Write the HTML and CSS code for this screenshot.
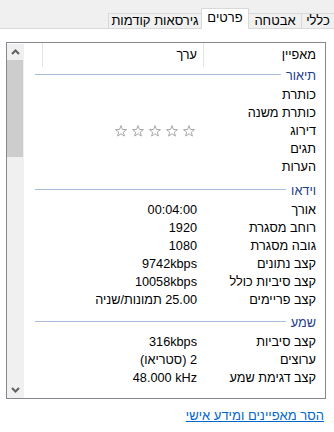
FILE: index.html
```html
<!DOCTYPE html>
<html lang="he" dir="rtl">
<head>
<meta charset="utf-8">
<link rel="stylesheet" href="styles.css">
</head>
<body>
<div class="tabs">
  <div class="tab tab-general">כללי</div>
  <div class="tab tab-security">אבטחה</div>
  <div class="tab tab-details selected">פרטים</div>
  <div class="tab tab-versions">גירסאות קודמות</div>
</div>
<div class="page">
  <div class="listbox">
    <div class="content">
      <div class="row header">
        <div class="cell prop hcell">מאפיין</div>
        <div class="cell val hcell">ערך</div>
        <div class="cell rest"></div>
      </div>
      <div class="group first"><span class="gtext">תיאור</span><span class="gline"></span></div>
      <div class="row"><div class="cell prop">כותרת</div><div class="cell val"></div><div class="cell rest"></div></div>
      <div class="row"><div class="cell prop">כותרת משנה</div><div class="cell val"></div><div class="cell rest"></div></div>
      <div class="row"><div class="cell prop">דירוג</div><div class="cell val">
        <div class="stars">
          <svg class="star" width="12" height="12" viewBox="0 0 12 12"><polygon points="6,0.6 7.41,4.46 11.52,4.61 8.28,7.14 9.41,11.09 6,8.8 2.59,11.09 3.72,7.14 0.48,4.61 4.59,4.46"/></svg>
          <svg class="star" width="12" height="12" viewBox="0 0 12 12"><polygon points="6,0.6 7.41,4.46 11.52,4.61 8.28,7.14 9.41,11.09 6,8.8 2.59,11.09 3.72,7.14 0.48,4.61 4.59,4.46"/></svg>
          <svg class="star" width="12" height="12" viewBox="0 0 12 12"><polygon points="6,0.6 7.41,4.46 11.52,4.61 8.28,7.14 9.41,11.09 6,8.8 2.59,11.09 3.72,7.14 0.48,4.61 4.59,4.46"/></svg>
          <svg class="star" width="12" height="12" viewBox="0 0 12 12"><polygon points="6,0.6 7.41,4.46 11.52,4.61 8.28,7.14 9.41,11.09 6,8.8 2.59,11.09 3.72,7.14 0.48,4.61 4.59,4.46"/></svg>
          <svg class="star" width="12" height="12" viewBox="0 0 12 12"><polygon points="6,0.6 7.41,4.46 11.52,4.61 8.28,7.14 9.41,11.09 6,8.8 2.59,11.09 3.72,7.14 0.48,4.61 4.59,4.46"/></svg>
        </div>
      </div><div class="cell rest"></div></div>
      <div class="row"><div class="cell prop">תגים</div><div class="cell val"></div><div class="cell rest"></div></div>
      <div class="row"><div class="cell prop">הערות</div><div class="cell val"></div><div class="cell rest"></div></div>

      <div class="group g-video"><span class="gtext">וידאו</span><span class="gline"></span></div>
      <div class="row"><div class="cell prop">אורך</div><div class="cell val">00:04:00</div><div class="cell rest"></div></div>
      <div class="row"><div class="cell prop">רוחב מסגרת</div><div class="cell val">1920</div><div class="cell rest"></div></div>
      <div class="row"><div class="cell prop">גובה מסגרת</div><div class="cell val">1080</div><div class="cell rest"></div></div>
      <div class="row"><div class="cell prop">קצב נתונים</div><div class="cell val">9742kbps</div><div class="cell rest"></div></div>
      <div class="row"><div class="cell prop">קצב סיביות כולל</div><div class="cell val">10058kbps</div><div class="cell rest"></div></div>
      <div class="row"><div class="cell prop">קצב פריימים</div><div class="cell val">25.00 תמונות/שניה</div><div class="cell rest"></div></div>

      <div class="group g-audio"><span class="gtext">שמע</span><span class="gline"></span></div>
      <div class="row"><div class="cell prop">קצב סיביות</div><div class="cell val">316kbps</div><div class="cell rest"></div></div>
      <div class="row"><div class="cell prop">ערוצים</div><div class="cell val">2 (סטריאו)</div><div class="cell rest"></div></div>
      <div class="row"><div class="cell prop">קצב דגימת שמע</div><div class="cell val"><span dir="ltr">48.000 kHz</span></div><div class="cell rest"></div></div>
      <div class="tail"><span class="tail-dots"></span></div>
    </div>
    <div class="scrollbar">
      <div class="sb-btn">
        <svg width="17" height="16" viewBox="0 0 17 16"><polyline points="5,10 8.5,6.5 12,10" class="chev"/></svg>
      </div>
      <div class="sb-track">
        <div class="sb-thumb"></div>
      </div>
      <div class="sb-btn">
        <svg width="17" height="16" viewBox="0 0 17 16"><polyline points="5,6 8.5,9.5 12,6" class="chev"/></svg>
      </div>
    </div>
  </div>
  <div class="linkrow"><a class="link" href="#">הסר מאפיינים ומידע אישי</a></div>
</div>
</body>
</html>
```

FILE: styles.css
```css
html, body {
  margin: 0;
  padding: 0;
}
body {
  width: 334px;
  height: 432px;
  overflow: hidden;
  background: #ffffff;
  font-family: "Liberation Sans", Arial, sans-serif;
  font-size: 12.7px;
  color: #000000;
  direction: rtl;
}

/* Tabs */
.tabs {
  height: 28px;
  background: #f0f0f0;
  border-bottom: 1px solid #d9d9d9;
  display: flex;
  align-items: flex-end;
  position: relative;
}
.tab {
  box-sizing: border-box;
  height: 15px;
  line-height: 13px;
  text-align: center;
  white-space: nowrap;
  border-top: 1px solid #d9d9d9;
  background: #f0f0f0;
  font-size: 13px;
}
.tab-general {
  width: 33px;
  border-left: 1px solid #d9d9d9;
}
.tab-security {
  width: 52px;
}
.tab-details {
  width: 48px;
}
.tab-versions {
  width: 93px;
  border-left: 1px solid #d9d9d9;
}
.tab.selected {
  height: 21px;
  line-height: 18px;
  background: #ffffff;
  border-left: 1px solid #d9d9d9;
  border-right: 1px solid #d9d9d9;
  margin-bottom: -1px;
  position: relative;
  z-index: 1;
}

/* Page */
.page {
  display: flex;
  flex-direction: column;
}
.listbox {
  box-sizing: border-box;
  margin: 13px 8px 0 6px;
  width: 320px;
  height: 357px;
  border: 1px solid #828790;
  display: flex;
  flex-direction: row;
  background: #ffffff;
}
.content {
  width: 299px;
  overflow: hidden;
  display: flex;
  flex-direction: column;
}
.row {
  display: grid;
  grid-template-columns: 122px 161px 16px;
  height: 18px;
  flex: none;
}
.cell {
  box-sizing: border-box;
  white-space: nowrap;
  overflow: hidden;
  line-height: 18px;
}
.prop {
  padding-right: 9px;
}
.val {
  padding-right: 6px;
}
.header {
  height: 24px;
}
.hcell {
  line-height: 24px;
  border-left: 1px solid #e5e5e5;
}

.group {
  display: flex;
  align-items: center;
  height: 19px;
  flex: none;
  padding: 0 9px;
  gap: 5px;
  margin-top: 5px;
}
.group.first {
  margin-top: 0;
}
.g-video {
  margin-top: 6px;
}
.gtext {
  color: #1e3c8c;
  line-height: 19px;
  white-space: nowrap;
}
.gline {
  flex: 1;
  height: 1px;
  background: #a9bcdc;
  margin-bottom: 4px;
}

.tail {
  flex: none;
  height: 12px;
  display: flex;
  align-items: flex-end;
  padding-right: 47px;
}
.tail-dots {
  width: 23px;
  height: 1px;
  background-image: linear-gradient(to right, #b0b0b0 1px, transparent 1px);
  background-size: 7px 1px;
}

.stars {
  display: flex;
  gap: 5px;
  height: 18px;
  align-items: center;
  padding-right: 2px;
  direction: ltr;
  justify-content: flex-end;
}
.star polygon {
  fill: #ffffff;
  stroke: #a8a8a8;
  stroke-width: 1;
  stroke-linejoin: miter;
}

/* Scrollbar */
.scrollbar {
  width: 17px;
  margin: 1px 2px 0 0;
  background: #f0f0f0;
  display: flex;
  flex-direction: column;
}
.sb-btn {
  height: 16px;
  flex: none;
}
.sb-btn svg {
  display: block;
}
.chev {
  fill: none;
  stroke: #606060;
  stroke-width: 2;
}
.sb-track {
  flex: 1;
  display: flex;
  flex-direction: column;
}
.sb-thumb {
  height: 97px;
  background: #cdcdcd;
  margin: 0 1px 0 0;
}

/* Link */
.linkrow {
  padding: 9px 10px 0 0;
  line-height: 15px;
  font-size: 13px;
}
.link {
  color: #0066cc;
  text-decoration: underline;
}
```
